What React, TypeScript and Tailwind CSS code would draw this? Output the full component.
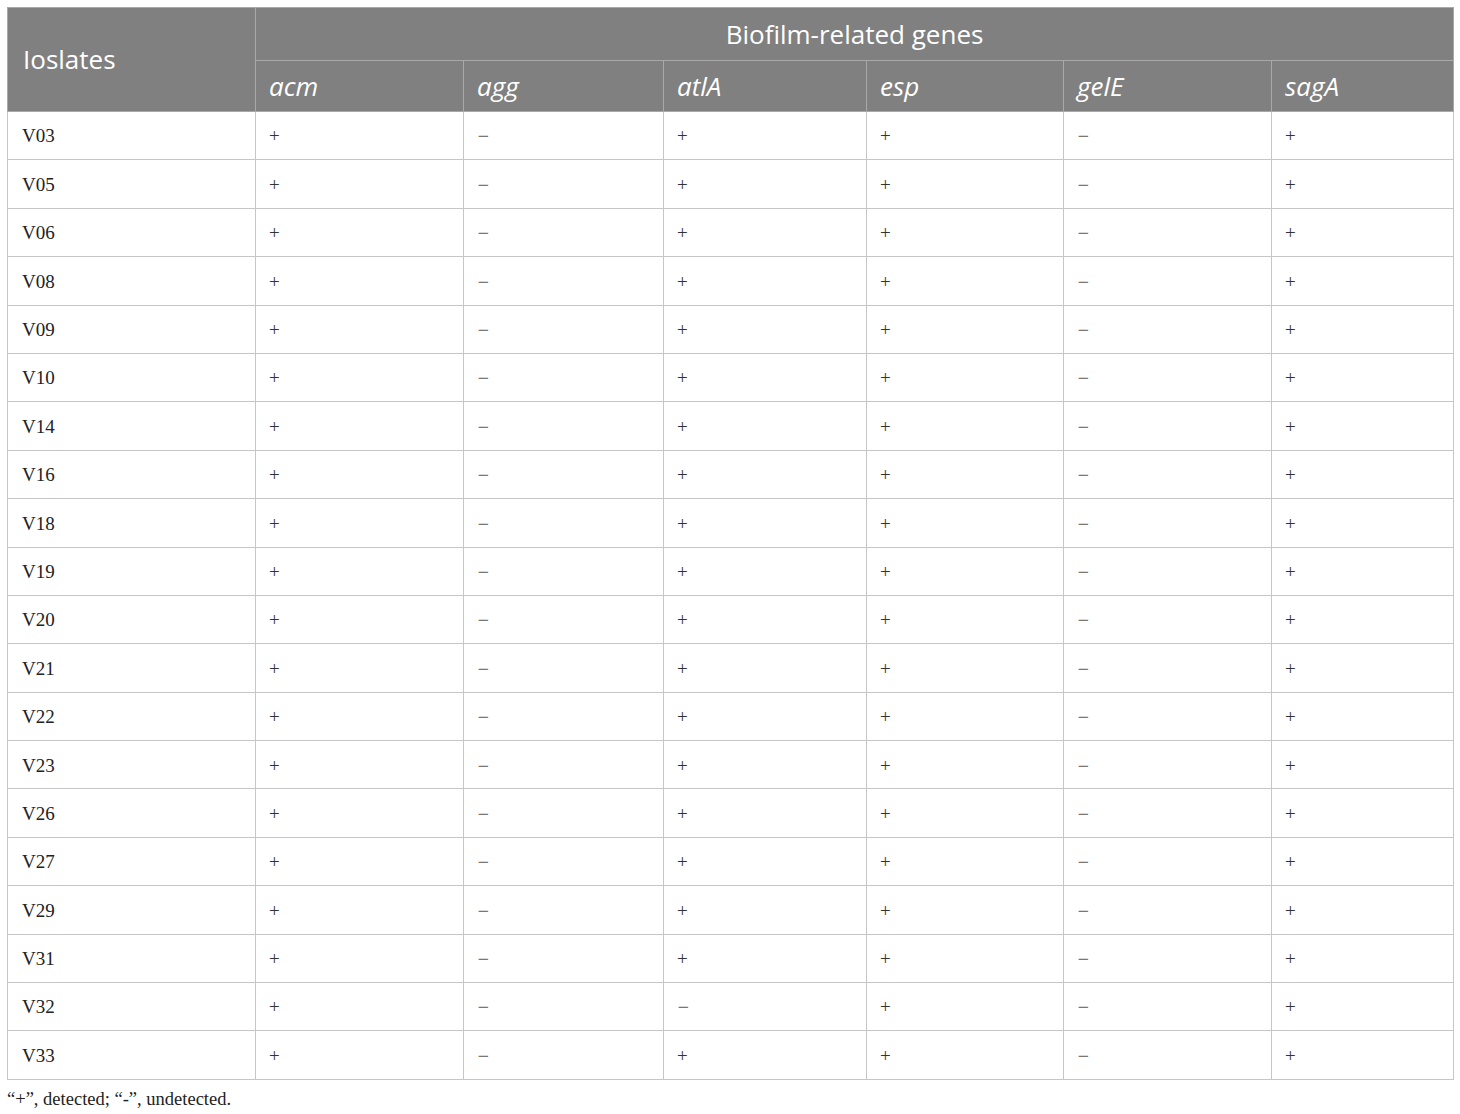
const genes = ['acm', 'agg', 'atlA', 'esp', 'gelE', 'sagA']
const widths = ['w-[248px]', 'w-[208px]', 'w-[200px]', 'w-[203px]', 'w-[197px]', 'w-[208px]', 'w-[182px]']

const isolates = [
  'V03', 'V05', 'V06', 'V08', 'V09', 'V10', 'V14', 'V16', 'V18', 'V19',
  'V20', 'V21', 'V22', 'V23', 'V26', 'V27', 'V29', 'V31', 'V32', 'V33',
]

// + / − per gene; only V32 lacks atlA
const rowValues = (id: string) => ['+', '−', id === 'V32' ? '−' : '+', '+', '−', '+']

export default function App() {
  return (
    <div className="min-h-screen bg-white px-[7px] pt-[7px]">
      <table className="w-[1446px] table-fixed border-collapse">
        <colgroup>
          {widths.map((w, i) => (
            <col key={i} className={w} />
          ))}
        </colgroup>
        <thead className="bg-[#808080] text-white font-['Open_Sans',sans-serif] text-[26px]">
          <tr className="h-[53px]">
            <th rowSpan={2} className="border border-[#a9a9a9] pl-[15px] text-left font-normal align-middle">
              Ioslates
            </th>
            <th colSpan={6} className="border border-[#a9a9a9] text-center font-normal">
              Biofilm-related genes
            </th>
          </tr>
          <tr className="h-[51px]">
            {genes.map((g) => (
              <th key={g} className="border border-[#a9a9a9] pl-[13px] text-left font-normal italic">
                {g}
              </th>
            ))}
          </tr>
        </thead>
        <tbody className="font-['Liberation_Serif',serif] text-[19px] text-[#222]">
          {isolates.map((id) => (
            <tr key={id} className="h-[48.4px]">
              <td className="border border-[#c6c6c6] pl-[14px] pt-[2px]">{id}</td>
              {rowValues(id).map((v, i) => (
                <td
                  key={i}
                  className={`border border-[#c6c6c6] pl-[13px] pt-[2px] ${
                    v === '+' ? 'text-[#333]' : "text-[#777] font-['DejaVu_Sans',sans-serif] text-[15px]"
                  }`}
                >
                  {v}
                </td>
              ))}
            </tr>
          ))}
        </tbody>
      </table>
      <p className="mt-[6px] font-['Liberation_Serif',serif] text-[18.5px] text-[#222]">
        “+”, detected; “-”, undetected.
      </p>
    </div>
  )
}
